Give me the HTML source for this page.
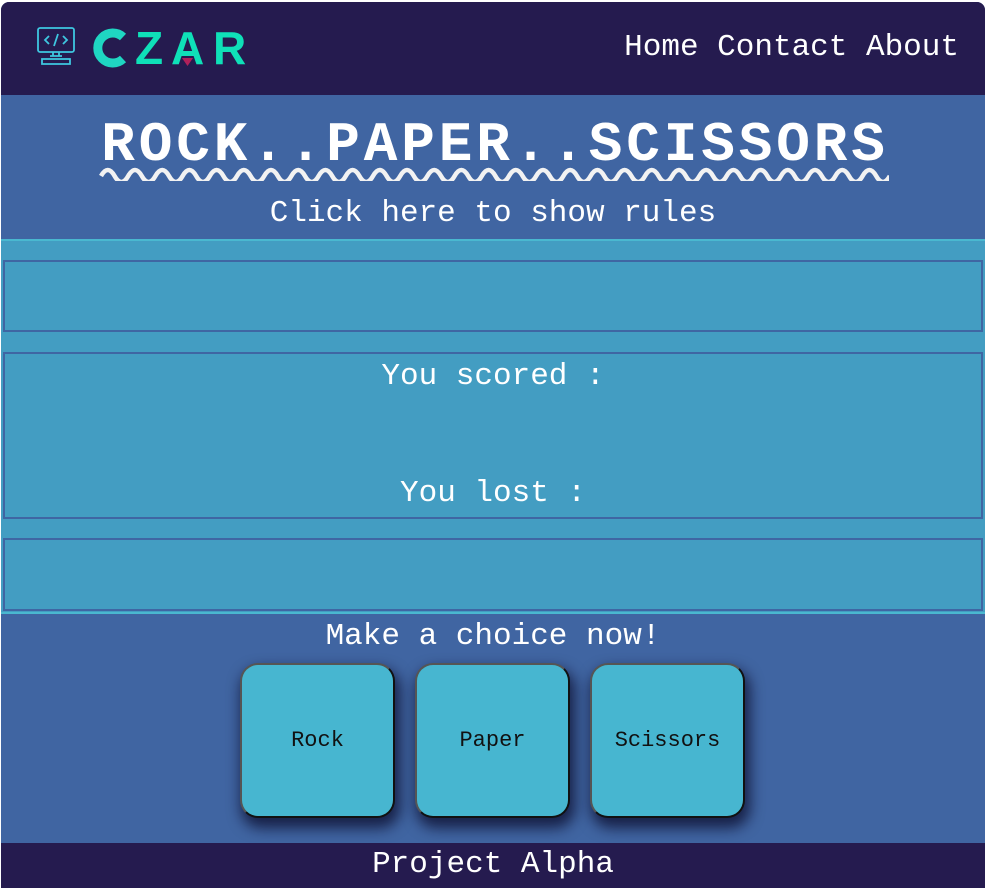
<!DOCTYPE html>
<html><head><meta charset="utf-8"><style>
*{margin:0;padding:0;box-sizing:border-box}
body{width:987px;height:888px;background:#fff;font-family:"Liberation Mono",monospace;color:#fff;overflow:hidden}
.wrap{position:absolute;left:1px;top:2px;width:984px;height:886px;border-radius:8px 8px 0 0;overflow:hidden;background:#4065a2}
.hdr{position:absolute;left:0;top:0;width:984px;height:93px;background:#251b4f}
.nav{position:absolute;right:26px;top:28px;font-size:31px;line-height:36px;white-space:pre}
.sec1{position:absolute;top:93px;left:0;width:984px;height:144px;background:#4065a2;text-align:center}
.title{position:absolute;left:0;width:984px;top:20px;font-size:56px;letter-spacing:3.9px;font-weight:bold;line-height:60px;text-align:center;padding-left:4px}
.sub{position:absolute;left:0;width:984px;top:101px;font-size:31px;line-height:36px}
.mid{position:absolute;top:237px;left:0;width:984px;height:375px;background:#439dc2;border-top:2px solid #4ab8d0;border-bottom:2px solid #4ab8d0}
.box{position:absolute;left:2px;width:980px;border:2px solid #3f66a3}
.lbl{position:absolute;left:0;width:976px;text-align:center;font-size:31px;line-height:36px}
.choose{position:absolute;top:617px;left:0;width:984px;text-align:center;font-size:31px;line-height:36px}
.btn{position:absolute;top:661px;width:155px;height:155px;border-radius:18px;background:#47b6d0;border:2px solid #555;border-right-color:#111;border-bottom-color:#111;box-shadow:3px 8px 14px 2px rgba(10,10,40,.75);color:#111;font-size:22px;line-height:151px;text-align:center}
.ftr{position:absolute;top:841px;left:0;width:984px;height:45px;background:#251b4f;text-align:center;font-size:31px;line-height:44px}
.lt{position:absolute;top:24px;font-family:"Liberation Sans",sans-serif;font-weight:bold;font-size:46px;line-height:44px;color:#0fe0b8}
</style></head><body>
<div class="wrap">
<div class="hdr">
<svg style="position:absolute;left:35px;top:24px" width="42" height="42" viewBox="0 0 42 42" fill="none" stroke="#3ec7e0" stroke-width="1.8">
<rect x="2" y="2" width="36" height="24" rx="2"/>
<path d="M13 10l-4 4 4 4M27 10l4 4-4 4M22 8l-4 12"/>
<path d="M17 26v4h6v-4M14 30h12M6 33h28v5H6z"/>
</svg>
<svg style="position:absolute;left:89px;top:26px" width="50" height="40" viewBox="0 0 50 40">
<path d="M33 9A15 15 0 1 0 33 31" fill="none" stroke="#1fd6c2" stroke-width="9"/>
</svg>
<div class="lt" style="left:134px">Z</div>
<div class="lt" style="left:170px">A</div>
<div class="lt" style="left:212px">R</div>
<svg style="position:absolute;left:180px;top:55px" width="14" height="10"><path d="M1 1h11l-5.5 8z" fill="#b0205a"/></svg>
<div class="nav">Home Contact About</div>
</div>
<div class="sec1">
<div class="title">ROCK..PAPER..SCISSORS</div>
<svg style="position:absolute;left:98px;top:70px" width="790" height="16" viewBox="0 0 790 16"><path d="M2 11 q6.8 -12 13.6 0 t13.6 0 t13.6 0 t13.6 0 t13.6 0 t13.6 0 t13.6 0 t13.6 0 t13.6 0 t13.6 0 t13.6 0 t13.6 0 t13.6 0 t13.6 0 t13.6 0 t13.6 0 t13.6 0 t13.6 0 t13.6 0 t13.6 0 t13.6 0 t13.6 0 t13.6 0 t13.6 0 t13.6 0 t13.6 0 t13.6 0 t13.6 0 t13.6 0 t13.6 0 t13.6 0 t13.6 0 t13.6 0 t13.6 0 t13.6 0 t13.6 0 t13.6 0 t13.6 0 t13.6 0 t13.6 0 t13.6 0 t13.6 0 t13.6 0 t13.6 0 t13.6 0 t13.6 0 t13.6 0 t13.6 0 t13.6 0 t13.6 0 t13.6 0 t13.6 0 t13.6 0 t13.6 0 t13.6 0 t13.6 0 t13.6 0 t13.6 0" fill="none" stroke="#f2f2f2" stroke-width="4.5"/></svg>
<div class="sub">Click here to show rules</div>
</div>
<div class="mid">
<div class="box" style="top:19px;height:72px"></div>
<div class="box" style="top:111px;height:167px"><div class="lbl" style="top:5px">You scored :</div><div class="lbl" style="top:122px">You lost :</div></div>
<div class="box" style="top:297px;height:73px"></div>
</div>
<div class="choose">Make a choice now!</div>
<div class="btn" style="left:239px">Rock</div>
<div class="btn" style="left:414px">Paper</div>
<div class="btn" style="left:589px">Scissors</div>
<div class="ftr">Project Alpha</div>
</div>
</body></html>
